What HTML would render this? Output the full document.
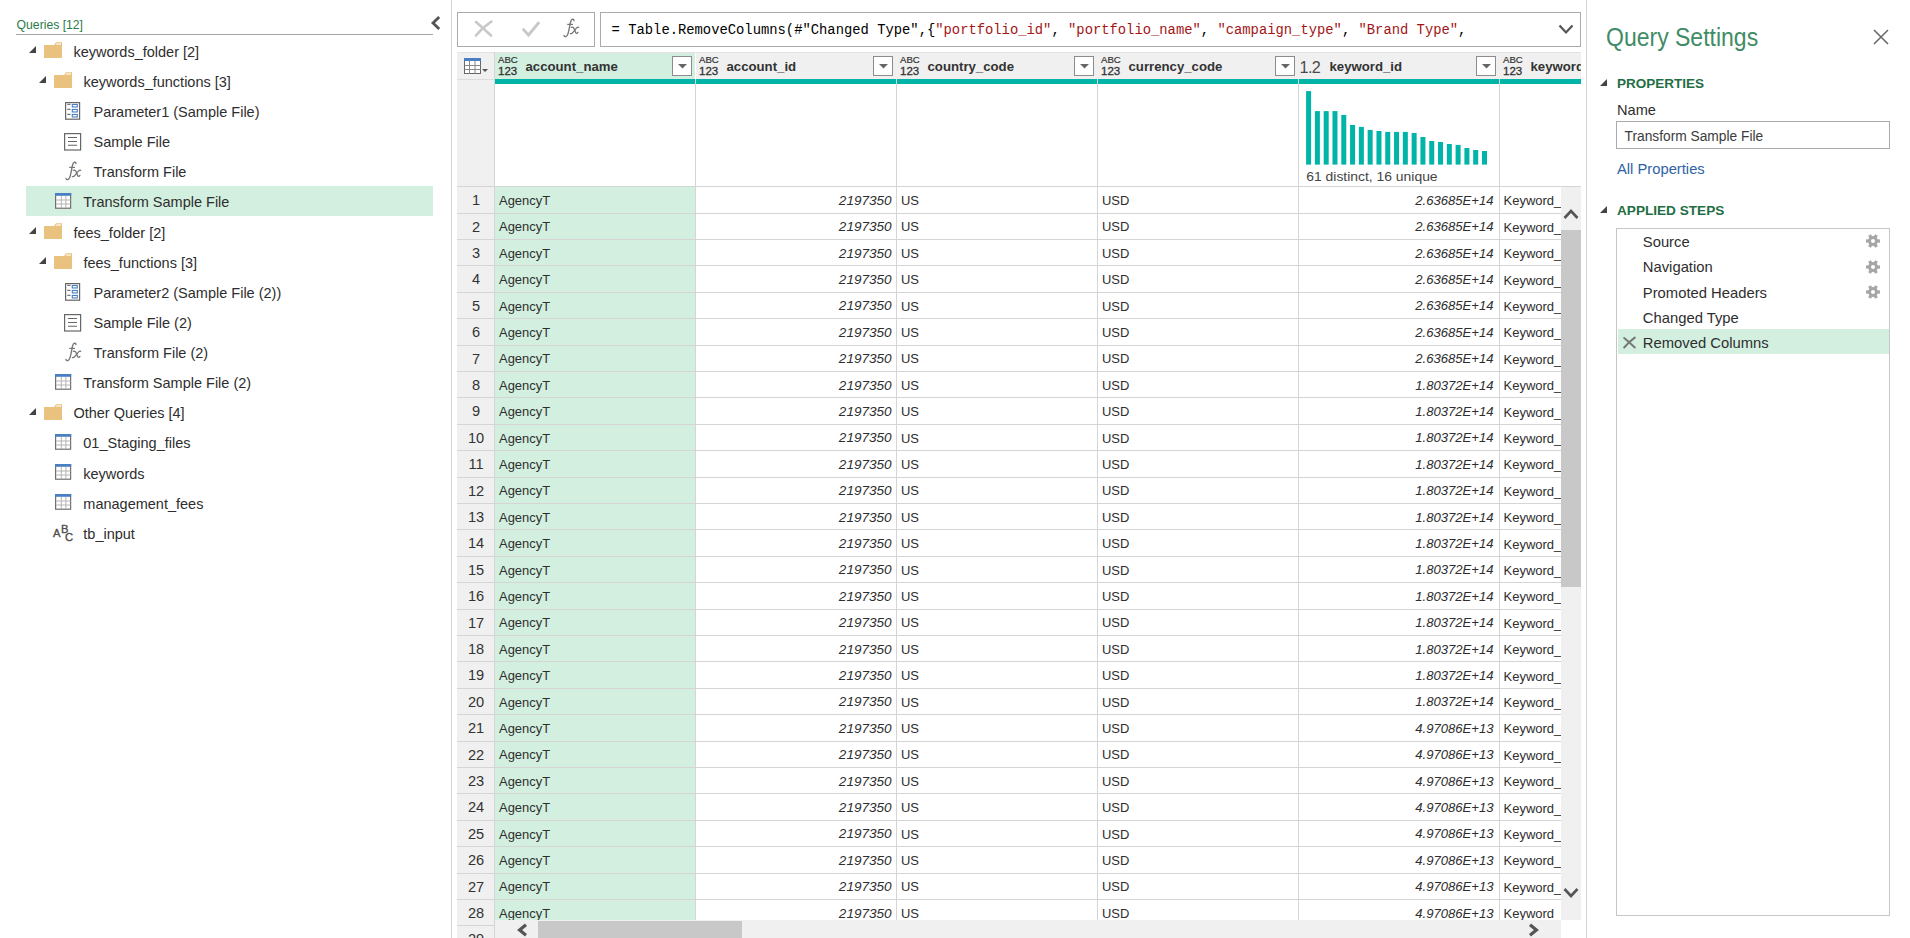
<!DOCTYPE html>
<html><head><meta charset="utf-8"><title>Power Query Editor</title>
<style>
html,body{margin:0;padding:0;background:#fff;}
body{width:1910px;height:938px;position:relative;overflow:hidden;font-family:"Liberation Sans",sans-serif;}
.t{position:absolute;white-space:nowrap;}
.r{position:absolute;}
svg{position:absolute;overflow:visible;}
</style></head><body>

<div class="t" style="left:16.60px;top:18.27px;font-size:12.2px;line-height:15px;color:#2b7a4b;font-weight:normal;font-style:normal;font-family:'Liberation Sans', sans-serif;">Queries [12]</div>
<div class="r" style="left:16px;top:34px;width:417px;height:1px;background:#a6a6a6;"></div>
<svg style="left:430px;top:15px" width="12" height="16" viewBox="0 0 12 16"><path d="M9.2 2 L3 8 L9.2 14" fill="none" stroke="#555" stroke-width="2.8"/></svg>
<div class="r" style="left:451px;top:0px;width:1px;height:938px;background:#d4d4d4;"></div>
<svg style="left:29px;top:46.3px" width="8" height="8" viewBox="0 0 8 8"><path d="M0 7 L7 7 L7 0 Z" fill="#444"/></svg>
<svg style="left:44px;top:42.0px" width="19" height="16" viewBox="0 0 19 16"><path d="M0 3 H10 L12 0.3 H18 V16 H0 Z" fill="#e9c27f"/><path d="M11.2 2.7 L12.6 1.2 H17 V2.7 Z" fill="#fbf0dc"/></svg>
<div class="t" style="left:73.40px;top:43.77px;font-size:14.5px;line-height:17px;color:#2e2e2e;font-weight:normal;font-style:normal;font-family:'Liberation Sans', sans-serif;">keywords_folder [2]</div>
<svg style="left:39px;top:76.425px" width="8" height="8" viewBox="0 0 8 8"><path d="M0 7 L7 7 L7 0 Z" fill="#444"/></svg>
<svg style="left:54px;top:72.125px" width="19" height="16" viewBox="0 0 19 16"><path d="M0 3 H10 L12 0.3 H18 V16 H0 Z" fill="#e9c27f"/><path d="M11.2 2.7 L12.6 1.2 H17 V2.7 Z" fill="#fbf0dc"/></svg>
<div class="t" style="left:83.40px;top:73.90px;font-size:14.5px;line-height:17px;color:#2e2e2e;font-weight:normal;font-style:normal;font-family:'Liberation Sans', sans-serif;">keywords_functions [3]</div>
<svg style="left:65px;top:102.25px" width="16" height="18" viewBox="0 0 16 18"><rect x="0.6" y="0.6" width="14" height="16.6" fill="#fff" stroke="#666" stroke-width="1.2"/><path d="M2.3 2.4 H5.5 M2.3 7.4 H5.5 M2.3 12.4 H5.5" stroke="#777" stroke-width="1.1"/><rect x="7.3" y="2.45" width="5" height="2.5" fill="#fff" stroke="#4a7fc1" stroke-width="1.1"/><rect x="7.3" y="7.45" width="5" height="2.5" fill="#fff" stroke="#4a7fc1" stroke-width="1.1"/><rect x="7.3" y="12.45" width="5" height="2.5" fill="#fff" stroke="#4a7fc1" stroke-width="1.1"/></svg>
<div class="t" style="left:93.50px;top:104.02px;font-size:14.5px;line-height:17px;color:#2e2e2e;font-weight:normal;font-style:normal;font-family:'Liberation Sans', sans-serif;">Parameter1 (Sample File)</div>
<svg style="left:64px;top:132.775px" width="18" height="18" viewBox="0 0 18 18"><rect x="0.6" y="0.6" width="16" height="16.4" fill="#fff" stroke="#666" stroke-width="1.2"/><path d="M4 4.5 H13 M4 8.5 H13 M4 12.3 H13" stroke="#666" stroke-width="1.1"/></svg>
<div class="t" style="left:93.50px;top:134.15px;font-size:14.5px;line-height:17px;color:#2e2e2e;font-weight:normal;font-style:normal;font-family:'Liberation Sans', sans-serif;">Sample File</div>
<svg style="left:60px;top:158.0px" width="24" height="24" viewBox="0 0 24 24"><path d="M6.0 20.4 Q6.3 22.1 8.1 21.5 Q9.9 20.6 10.9 15.2 L12.3 8.0 Q13.2 4.1 14.8 4.2 Q16.2 4.4 15.9 5.6" stroke="#777" stroke-width="1.35" fill="none" stroke-linecap="round"/><path d="M9.2 9.4 H15.0" stroke="#777" stroke-width="1.2" fill="none"/><path d="M13.4 12.4 Q15.1 11.6 16.0 13.6 L17.7 17.6 Q18.6 19.2 19.9 17.4" stroke="#777" stroke-width="1.3" fill="none" stroke-linecap="round"/><path d="M20.7 12.3 Q19.6 11.8 18.4 13.1 L14.9 17.4 Q13.8 18.9 12.4 18.6" stroke="#777" stroke-width="1.3" fill="none" stroke-linecap="round"/></svg>
<div class="t" style="left:93.50px;top:164.27px;font-size:14.5px;line-height:17px;color:#2e2e2e;font-weight:normal;font-style:normal;font-family:'Liberation Sans', sans-serif;">Transform File</div>
<div class="r" style="left:26px;top:186px;width:407px;height:30px;background:#d3efe0;"></div>
<svg style="left:55px;top:192.82500000000002px" width="17" height="16" viewBox="0 0 17 16"><rect x="0.6" y="0.6" width="15" height="14.6" fill="#fff" stroke="#6e6e6e" stroke-width="1.2"/><path d="M6.3 3 V15 M10.9 3 V15 M1 7 H15.6 M1 11 H15.6" stroke="#b4b4b4" stroke-width="1" fill="none"/><rect x="0" y="0" width="16.2" height="2.8" fill="#4a7fc1"/></svg>
<div class="t" style="left:83.30px;top:194.40px;font-size:14.5px;line-height:17px;color:#2e2e2e;font-weight:normal;font-style:normal;font-family:'Liberation Sans', sans-serif;">Transform Sample File</div>
<svg style="left:29px;top:227.05px" width="8" height="8" viewBox="0 0 8 8"><path d="M0 7 L7 7 L7 0 Z" fill="#444"/></svg>
<svg style="left:44px;top:222.75px" width="19" height="16" viewBox="0 0 19 16"><path d="M0 3 H10 L12 0.3 H18 V16 H0 Z" fill="#e9c27f"/><path d="M11.2 2.7 L12.6 1.2 H17 V2.7 Z" fill="#fbf0dc"/></svg>
<div class="t" style="left:73.40px;top:224.52px;font-size:14.5px;line-height:17px;color:#2e2e2e;font-weight:normal;font-style:normal;font-family:'Liberation Sans', sans-serif;">fees_folder [2]</div>
<svg style="left:39px;top:257.175px" width="8" height="8" viewBox="0 0 8 8"><path d="M0 7 L7 7 L7 0 Z" fill="#444"/></svg>
<svg style="left:54px;top:252.875px" width="19" height="16" viewBox="0 0 19 16"><path d="M0 3 H10 L12 0.3 H18 V16 H0 Z" fill="#e9c27f"/><path d="M11.2 2.7 L12.6 1.2 H17 V2.7 Z" fill="#fbf0dc"/></svg>
<div class="t" style="left:83.40px;top:254.65px;font-size:14.5px;line-height:17px;color:#2e2e2e;font-weight:normal;font-style:normal;font-family:'Liberation Sans', sans-serif;">fees_functions [3]</div>
<svg style="left:65px;top:283.0px" width="16" height="18" viewBox="0 0 16 18"><rect x="0.6" y="0.6" width="14" height="16.6" fill="#fff" stroke="#666" stroke-width="1.2"/><path d="M2.3 2.4 H5.5 M2.3 7.4 H5.5 M2.3 12.4 H5.5" stroke="#777" stroke-width="1.1"/><rect x="7.3" y="2.45" width="5" height="2.5" fill="#fff" stroke="#4a7fc1" stroke-width="1.1"/><rect x="7.3" y="7.45" width="5" height="2.5" fill="#fff" stroke="#4a7fc1" stroke-width="1.1"/><rect x="7.3" y="12.45" width="5" height="2.5" fill="#fff" stroke="#4a7fc1" stroke-width="1.1"/></svg>
<div class="t" style="left:93.50px;top:284.77px;font-size:14.5px;line-height:17px;color:#2e2e2e;font-weight:normal;font-style:normal;font-family:'Liberation Sans', sans-serif;">Parameter2 (Sample File (2))</div>
<svg style="left:64px;top:313.52500000000003px" width="18" height="18" viewBox="0 0 18 18"><rect x="0.6" y="0.6" width="16" height="16.4" fill="#fff" stroke="#666" stroke-width="1.2"/><path d="M4 4.5 H13 M4 8.5 H13 M4 12.3 H13" stroke="#666" stroke-width="1.1"/></svg>
<div class="t" style="left:93.50px;top:314.90px;font-size:14.5px;line-height:17px;color:#2e2e2e;font-weight:normal;font-style:normal;font-family:'Liberation Sans', sans-serif;">Sample File (2)</div>
<svg style="left:60px;top:338.75px" width="24" height="24" viewBox="0 0 24 24"><path d="M6.0 20.4 Q6.3 22.1 8.1 21.5 Q9.9 20.6 10.9 15.2 L12.3 8.0 Q13.2 4.1 14.8 4.2 Q16.2 4.4 15.9 5.6" stroke="#777" stroke-width="1.35" fill="none" stroke-linecap="round"/><path d="M9.2 9.4 H15.0" stroke="#777" stroke-width="1.2" fill="none"/><path d="M13.4 12.4 Q15.1 11.6 16.0 13.6 L17.7 17.6 Q18.6 19.2 19.9 17.4" stroke="#777" stroke-width="1.3" fill="none" stroke-linecap="round"/><path d="M20.7 12.3 Q19.6 11.8 18.4 13.1 L14.9 17.4 Q13.8 18.9 12.4 18.6" stroke="#777" stroke-width="1.3" fill="none" stroke-linecap="round"/></svg>
<div class="t" style="left:93.50px;top:345.02px;font-size:14.5px;line-height:17px;color:#2e2e2e;font-weight:normal;font-style:normal;font-family:'Liberation Sans', sans-serif;">Transform File (2)</div>
<svg style="left:55px;top:373.575px" width="17" height="16" viewBox="0 0 17 16"><rect x="0.6" y="0.6" width="15" height="14.6" fill="#fff" stroke="#6e6e6e" stroke-width="1.2"/><path d="M6.3 3 V15 M10.9 3 V15 M1 7 H15.6 M1 11 H15.6" stroke="#b4b4b4" stroke-width="1" fill="none"/><rect x="0" y="0" width="16.2" height="2.8" fill="#4a7fc1"/></svg>
<div class="t" style="left:83.30px;top:375.15px;font-size:14.5px;line-height:17px;color:#2e2e2e;font-weight:normal;font-style:normal;font-family:'Liberation Sans', sans-serif;">Transform Sample File (2)</div>
<svg style="left:29px;top:407.8px" width="8" height="8" viewBox="0 0 8 8"><path d="M0 7 L7 7 L7 0 Z" fill="#444"/></svg>
<svg style="left:44px;top:403.5px" width="19" height="16" viewBox="0 0 19 16"><path d="M0 3 H10 L12 0.3 H18 V16 H0 Z" fill="#e9c27f"/><path d="M11.2 2.7 L12.6 1.2 H17 V2.7 Z" fill="#fbf0dc"/></svg>
<div class="t" style="left:73.40px;top:405.27px;font-size:14.5px;line-height:17px;color:#2e2e2e;font-weight:normal;font-style:normal;font-family:'Liberation Sans', sans-serif;">Other Queries [4]</div>
<svg style="left:55px;top:433.825px" width="17" height="16" viewBox="0 0 17 16"><rect x="0.6" y="0.6" width="15" height="14.6" fill="#fff" stroke="#6e6e6e" stroke-width="1.2"/><path d="M6.3 3 V15 M10.9 3 V15 M1 7 H15.6 M1 11 H15.6" stroke="#b4b4b4" stroke-width="1" fill="none"/><rect x="0" y="0" width="16.2" height="2.8" fill="#4a7fc1"/></svg>
<div class="t" style="left:83.30px;top:435.40px;font-size:14.5px;line-height:17px;color:#2e2e2e;font-weight:normal;font-style:normal;font-family:'Liberation Sans', sans-serif;">01_Staging_files</div>
<svg style="left:55px;top:463.95px" width="17" height="16" viewBox="0 0 17 16"><rect x="0.6" y="0.6" width="15" height="14.6" fill="#fff" stroke="#6e6e6e" stroke-width="1.2"/><path d="M6.3 3 V15 M10.9 3 V15 M1 7 H15.6 M1 11 H15.6" stroke="#b4b4b4" stroke-width="1" fill="none"/><rect x="0" y="0" width="16.2" height="2.8" fill="#4a7fc1"/></svg>
<div class="t" style="left:83.30px;top:465.52px;font-size:14.5px;line-height:17px;color:#2e2e2e;font-weight:normal;font-style:normal;font-family:'Liberation Sans', sans-serif;">keywords</div>
<svg style="left:55px;top:494.075px" width="17" height="16" viewBox="0 0 17 16"><rect x="0.6" y="0.6" width="15" height="14.6" fill="#fff" stroke="#6e6e6e" stroke-width="1.2"/><path d="M6.3 3 V15 M10.9 3 V15 M1 7 H15.6 M1 11 H15.6" stroke="#b4b4b4" stroke-width="1" fill="none"/><rect x="0" y="0" width="16.2" height="2.8" fill="#4a7fc1"/></svg>
<div class="t" style="left:83.30px;top:495.65px;font-size:14.5px;line-height:17px;color:#2e2e2e;font-weight:normal;font-style:normal;font-family:'Liberation Sans', sans-serif;">management_fees</div>
<svg style="left:0px;top:0px" width="1" height="1"><g style="font-family:'Liberation Sans', sans-serif;font-size:11.2px" fill="#4d4d4d" stroke="#4d4d4d" stroke-width="0.35"><text x="53.0" y="536.9">A</text><text x="61.0" y="532.9">B</text><text x="65.1" y="541.0">C</text></g></svg>
<div class="t" style="left:83.30px;top:525.77px;font-size:14.5px;line-height:17px;color:#2e2e2e;font-weight:normal;font-style:normal;font-family:'Liberation Sans', sans-serif;">tb_input</div>
<div class="r" style="left:457px;top:12px;width:138px;height:35px;background:#fff;box-sizing:border-box;border:1px solid #ababab"></div>
<svg style="left:474px;top:20px" width="20" height="17" viewBox="0 0 20 17"><path d="M2 2 Q9 8 17 15.5 M17.5 1.5 Q9 7 2 15.5" stroke="#c8c8c8" stroke-width="2.6" fill="none" stroke-linecap="round"/></svg>
<svg style="left:522px;top:21px" width="18" height="16" viewBox="0 0 18 16"><path d="M1.5 8.5 L6.5 14 L16.5 2" stroke="#c8c8c8" stroke-width="2.8" fill="none" stroke-linecap="round"/></svg>
<svg style="left:558px;top:15px" width="24" height="24" viewBox="0 0 24 24"><path d="M6.0 20.4 Q6.3 22.1 8.1 21.5 Q9.9 20.6 10.9 15.2 L12.3 8.0 Q13.2 4.1 14.8 4.2 Q16.2 4.4 15.9 5.6" stroke="#777" stroke-width="1.35" fill="none" stroke-linecap="round"/><path d="M9.2 9.4 H15.0" stroke="#777" stroke-width="1.2" fill="none"/><path d="M13.4 12.4 Q15.1 11.6 16.0 13.6 L17.7 17.6 Q18.6 19.2 19.9 17.4" stroke="#777" stroke-width="1.3" fill="none" stroke-linecap="round"/><path d="M20.7 12.3 Q19.6 11.8 18.4 13.1 L14.9 17.4 Q13.8 18.9 12.4 18.6" stroke="#777" stroke-width="1.3" fill="none" stroke-linecap="round"/></svg>
<div class="r" style="left:600px;top:12px;width:981px;height:35px;background:#fff;box-sizing:border-box;border:1px solid #ababab"></div>
<div class="t" style="left:611.60px;top:22.12px;font-size:13.83px;line-height:17px;color:#000;font-weight:normal;font-style:normal;font-family:'Liberation Mono', monospace;">= Table.RemoveColumns(#"Changed Type",{<span style="color:#a31515">"portfolio_id"</span>, <span style="color:#a31515">"portfolio_name"</span>, <span style="color:#a31515">"campaign_type"</span>, <span style="color:#a31515">"Brand Type"</span>,</div>
<svg style="left:1558px;top:24px" width="16" height="11" viewBox="0 0 16 11"><path d="M1.5 1.5 L8 8.5 L14.5 1.5" stroke="#555" stroke-width="2.2" fill="none"/></svg>
<div class="r" style="left:457px;top:52px;width:38px;height:27px;background:#f0f0f0;"></div>
<div class="r" style="left:495px;top:52px;width:200px;height:27px;background:#d3efe0;"></div>
<div class="r" style="left:696px;top:52px;width:885px;height:27px;background:#f0f0f0;"></div>
<div class="r" style="left:457px;top:52px;width:1124px;height:1px;background:#e3e3e3;"></div>
<div class="r" style="left:457px;top:79px;width:38px;height:859px;background:#f0f0f0;"></div>
<div class="r" style="left:457px;top:79px;width:38px;height:1px;background:#dcdcdc;"></div>
<div class="r" style="left:495px;top:186px;width:200px;height:734px;background:#d3efe0;"></div>
<div class="r" style="left:495px;top:79px;width:1086px;height:5px;background:#00b4a8;"></div>
<div class="r" style="left:695px;top:79px;width:1px;height:5px;background:#e8f6f4;"></div>
<div class="r" style="left:896px;top:79px;width:1px;height:5px;background:#e8f6f4;"></div>
<div class="r" style="left:1097px;top:79px;width:1px;height:5px;background:#e8f6f4;"></div>
<div class="r" style="left:1298px;top:79px;width:1px;height:5px;background:#e8f6f4;"></div>
<div class="r" style="left:1499px;top:79px;width:1px;height:5px;background:#e8f6f4;"></div>
<div class="r" style="left:494px;top:52px;width:1px;height:886px;background:#d5d5d5;"></div>
<div class="r" style="left:695px;top:79px;width:1px;height:841px;background:#d5d5d5;"></div>
<div class="r" style="left:896px;top:79px;width:1px;height:841px;background:#d5d5d5;"></div>
<div class="r" style="left:1097px;top:79px;width:1px;height:841px;background:#d5d5d5;"></div>
<div class="r" style="left:1298px;top:79px;width:1px;height:841px;background:#d5d5d5;"></div>
<div class="r" style="left:1499px;top:79px;width:1px;height:841px;background:#d5d5d5;"></div>
<div class="r" style="left:457px;top:186.2px;width:1124px;height:1px;background:#d5d5d5;"></div>
<div class="r" style="left:457px;top:212.6px;width:1124px;height:1px;background:#d5d5d5;"></div>
<div class="r" style="left:457px;top:239.0px;width:1124px;height:1px;background:#d5d5d5;"></div>
<div class="r" style="left:457px;top:265.4px;width:1124px;height:1px;background:#d5d5d5;"></div>
<div class="r" style="left:457px;top:291.8px;width:1124px;height:1px;background:#d5d5d5;"></div>
<div class="r" style="left:457px;top:318.2px;width:1124px;height:1px;background:#d5d5d5;"></div>
<div class="r" style="left:457px;top:344.6px;width:1124px;height:1px;background:#d5d5d5;"></div>
<div class="r" style="left:457px;top:371.0px;width:1124px;height:1px;background:#d5d5d5;"></div>
<div class="r" style="left:457px;top:397.4px;width:1124px;height:1px;background:#d5d5d5;"></div>
<div class="r" style="left:457px;top:423.8px;width:1124px;height:1px;background:#d5d5d5;"></div>
<div class="r" style="left:457px;top:450.2px;width:1124px;height:1px;background:#d5d5d5;"></div>
<div class="r" style="left:457px;top:476.6px;width:1124px;height:1px;background:#d5d5d5;"></div>
<div class="r" style="left:457px;top:503.0px;width:1124px;height:1px;background:#d5d5d5;"></div>
<div class="r" style="left:457px;top:529.4px;width:1124px;height:1px;background:#d5d5d5;"></div>
<div class="r" style="left:457px;top:555.8px;width:1124px;height:1px;background:#d5d5d5;"></div>
<div class="r" style="left:457px;top:582.2px;width:1124px;height:1px;background:#d5d5d5;"></div>
<div class="r" style="left:457px;top:608.6px;width:1124px;height:1px;background:#d5d5d5;"></div>
<div class="r" style="left:457px;top:635.0px;width:1124px;height:1px;background:#d5d5d5;"></div>
<div class="r" style="left:457px;top:661.4px;width:1124px;height:1px;background:#d5d5d5;"></div>
<div class="r" style="left:457px;top:687.8px;width:1124px;height:1px;background:#d5d5d5;"></div>
<div class="r" style="left:457px;top:714.2px;width:1124px;height:1px;background:#d5d5d5;"></div>
<div class="r" style="left:457px;top:740.6px;width:1124px;height:1px;background:#d5d5d5;"></div>
<div class="r" style="left:457px;top:767.0px;width:1124px;height:1px;background:#d5d5d5;"></div>
<div class="r" style="left:457px;top:793.4px;width:1124px;height:1px;background:#d5d5d5;"></div>
<div class="r" style="left:457px;top:819.8px;width:1124px;height:1px;background:#d5d5d5;"></div>
<div class="r" style="left:457px;top:846.2px;width:1124px;height:1px;background:#d5d5d5;"></div>
<div class="r" style="left:457px;top:872.6px;width:1124px;height:1px;background:#d5d5d5;"></div>
<div class="r" style="left:457px;top:899.0px;width:1124px;height:1px;background:#d5d5d5;"></div>
<div class="r" style="left:457px;top:925.4px;width:1124px;height:1px;background:#d5d5d5;"></div>
<svg style="left:464px;top:58px" width="26" height="17" viewBox="0 0 26 17"><rect x="0.5" y="0.5" width="16" height="15" fill="#fff" stroke="#666"/><rect x="0" y="0" width="17" height="3" fill="#4a7fc1"/><path d="M0.5 7.5 H16.5 M0.5 11.5 H16.5 M5.5 3 V15.5 M11 3 V15.5" stroke="#888" fill="none"/><path d="M18 11 H24 L21 14 Z" fill="#555"/></svg>
<div class="t" style="left:498.0px;top:55px;font-size:9.6px;line-height:10px;color:#333;-webkit-text-stroke:0.2px #333">ABC</div>
<div class="t" style="left:498.0px;top:64.5px;font-size:11.5px;line-height:12px;color:#333;-webkit-text-stroke:0.3px #333">123</div>
<div class="t" style="left:525.50px;top:59.02px;font-size:13.2px;line-height:16px;color:#333;font-weight:bold;font-style:normal;font-family:'Liberation Sans', sans-serif;">account_name</div>
<div class="r" style="left:672.0px;top:56px;width:20px;height:20px;box-sizing:border-box;background:#fff;border:1px solid #8c8c8c"></div>
<svg style="left:677.5px;top:64px" width="9" height="5" viewBox="0 0 9 5"><path d="M0 0 H9 L4.5 4.5 Z" fill="#666"/></svg>
<div class="t" style="left:699.0px;top:55px;font-size:9.6px;line-height:10px;color:#333;-webkit-text-stroke:0.2px #333">ABC</div>
<div class="t" style="left:699.0px;top:64.5px;font-size:11.5px;line-height:12px;color:#333;-webkit-text-stroke:0.3px #333">123</div>
<div class="t" style="left:726.50px;top:59.02px;font-size:13.2px;line-height:16px;color:#333;font-weight:bold;font-style:normal;font-family:'Liberation Sans', sans-serif;">account_id</div>
<div class="r" style="left:873.0px;top:56px;width:20px;height:20px;box-sizing:border-box;background:#fff;border:1px solid #8c8c8c"></div>
<svg style="left:878.5px;top:64px" width="9" height="5" viewBox="0 0 9 5"><path d="M0 0 H9 L4.5 4.5 Z" fill="#666"/></svg>
<div class="t" style="left:900.0px;top:55px;font-size:9.6px;line-height:10px;color:#333;-webkit-text-stroke:0.2px #333">ABC</div>
<div class="t" style="left:900.0px;top:64.5px;font-size:11.5px;line-height:12px;color:#333;-webkit-text-stroke:0.3px #333">123</div>
<div class="t" style="left:927.50px;top:59.02px;font-size:13.2px;line-height:16px;color:#333;font-weight:bold;font-style:normal;font-family:'Liberation Sans', sans-serif;">country_code</div>
<div class="r" style="left:1074.0px;top:56px;width:20px;height:20px;box-sizing:border-box;background:#fff;border:1px solid #8c8c8c"></div>
<svg style="left:1079.5px;top:64px" width="9" height="5" viewBox="0 0 9 5"><path d="M0 0 H9 L4.5 4.5 Z" fill="#666"/></svg>
<div class="t" style="left:1101.0px;top:55px;font-size:9.6px;line-height:10px;color:#333;-webkit-text-stroke:0.2px #333">ABC</div>
<div class="t" style="left:1101.0px;top:64.5px;font-size:11.5px;line-height:12px;color:#333;-webkit-text-stroke:0.3px #333">123</div>
<div class="t" style="left:1128.50px;top:59.02px;font-size:13.2px;line-height:16px;color:#333;font-weight:bold;font-style:normal;font-family:'Liberation Sans', sans-serif;">currency_code</div>
<div class="r" style="left:1275.0px;top:56px;width:20px;height:20px;box-sizing:border-box;background:#fff;border:1px solid #8c8c8c"></div>
<svg style="left:1280.5px;top:64px" width="9" height="5" viewBox="0 0 9 5"><path d="M0 0 H9 L4.5 4.5 Z" fill="#666"/></svg>
<div class="t" style="left:1299.5px;top:57.6px;font-size:16.2px;line-height:19px;color:#4a4a4a;letter-spacing:-0.6px">1.2</div>
<div class="t" style="left:1329.50px;top:59.02px;font-size:13.2px;line-height:16px;color:#333;font-weight:bold;font-style:normal;font-family:'Liberation Sans', sans-serif;">keyword_id</div>
<div class="r" style="left:1476.0px;top:56px;width:20px;height:20px;box-sizing:border-box;background:#fff;border:1px solid #8c8c8c"></div>
<svg style="left:1481.5px;top:64px" width="9" height="5" viewBox="0 0 9 5"><path d="M0 0 H9 L4.5 4.5 Z" fill="#666"/></svg>
<div class="t" style="left:1503.0px;top:55px;font-size:9.6px;line-height:10px;color:#333;-webkit-text-stroke:0.2px #333">ABC</div>
<div class="t" style="left:1503.0px;top:64.5px;font-size:11.5px;line-height:12px;color:#333;-webkit-text-stroke:0.3px #333">123</div>
<div class="t" style="left:1530.50px;top:59.02px;font-size:13.2px;line-height:16px;color:#333;font-weight:bold;font-style:normal;font-family:'Liberation Sans', sans-serif;width:50.5px;overflow:hidden;">keyword_name</div>
<div class="r" style="left:1581px;top:48px;width:5px;height:890px;background:#fff;"></div>
<svg style="left:1306px;top:91px" width="190" height="74" viewBox="0 0 190 74"><rect x="0.10" y="0.1" width="5" height="73.5" fill="#00b4a8"/><rect x="8.89" y="20.1" width="5" height="53.5" fill="#00b4a8"/><rect x="17.69" y="20.1" width="5" height="53.5" fill="#00b4a8"/><rect x="26.48" y="20.1" width="5" height="53.5" fill="#00b4a8"/><rect x="35.28" y="23.9" width="5" height="49.7" fill="#00b4a8"/><rect x="44.07" y="33.9" width="5" height="39.7" fill="#00b4a8"/><rect x="52.87" y="35.9" width="5" height="37.7" fill="#00b4a8"/><rect x="61.66" y="38.9" width="5" height="34.7" fill="#00b4a8"/><rect x="70.46" y="40.0" width="5" height="33.6" fill="#00b4a8"/><rect x="79.25" y="40.9" width="5" height="32.7" fill="#00b4a8"/><rect x="88.05" y="40.9" width="5" height="32.7" fill="#00b4a8"/><rect x="96.84" y="40.9" width="5" height="32.7" fill="#00b4a8"/><rect x="105.64" y="42.0" width="5" height="31.6" fill="#00b4a8"/><rect x="114.43" y="46.0" width="5" height="27.6" fill="#00b4a8"/><rect x="123.23" y="50.0" width="5" height="23.6" fill="#00b4a8"/><rect x="132.02" y="51.0" width="5" height="22.6" fill="#00b4a8"/><rect x="140.82" y="53.0" width="5" height="20.6" fill="#00b4a8"/><rect x="149.61" y="53.9" width="5" height="19.7" fill="#00b4a8"/><rect x="158.41" y="57.0" width="5" height="16.6" fill="#00b4a8"/><rect x="167.20" y="59.0" width="5" height="14.6" fill="#00b4a8"/><rect x="176.00" y="60.0" width="5" height="13.6" fill="#00b4a8"/></svg>
<div class="t" style="left:1306.30px;top:167.98px;font-size:13.9px;line-height:17px;color:#444;font-weight:normal;font-style:normal;font-family:'Liberation Sans', sans-serif;transform:scaleY(0.92);transform-origin:0 80%;">61 distinct, 16 unique</div>
<div class="t" style="left:457px;width:38px;text-align:center;top:192.1px;font-size:14.6px;line-height:17px;color:#333">1</div>
<div class="t" style="left:499.00px;top:192.91px;font-size:12.96px;line-height:16px;color:#2e2e2e;font-weight:normal;font-style:normal;font-family:'Liberation Sans', sans-serif;">AgencyT</div>
<div class="t" style="right:1018.40px;top:192.70px;font-size:13.56px;line-height:16px;color:#2e2e2e;font-weight:normal;font-style:italic;font-family:'Liberation Sans', sans-serif;text-align:right">2197350</div>
<div class="t" style="left:901.00px;top:192.91px;font-size:12.96px;line-height:16px;color:#2e2e2e;font-weight:normal;font-style:normal;font-family:'Liberation Sans', sans-serif;">US</div>
<div class="t" style="left:1102.00px;top:192.91px;font-size:12.96px;line-height:16px;color:#2e2e2e;font-weight:normal;font-style:normal;font-family:'Liberation Sans', sans-serif;">USD</div>
<div class="t" style="right:416.40px;top:192.85px;font-size:13.12px;line-height:16px;color:#2e2e2e;font-weight:normal;font-style:italic;font-family:'Liberation Sans', sans-serif;text-align:right">2.63685E+14</div>
<div class="t" style="left:1503.5px;width:57px;overflow:hidden;top:193.3px;font-size:13px;line-height:16px;color:#2e2e2e">Keyword_name</div>
<div class="t" style="left:457px;width:38px;text-align:center;top:218.5px;font-size:14.6px;line-height:17px;color:#333">2</div>
<div class="t" style="left:499.00px;top:219.31px;font-size:12.96px;line-height:16px;color:#2e2e2e;font-weight:normal;font-style:normal;font-family:'Liberation Sans', sans-serif;">AgencyT</div>
<div class="t" style="right:1018.40px;top:219.10px;font-size:13.56px;line-height:16px;color:#2e2e2e;font-weight:normal;font-style:italic;font-family:'Liberation Sans', sans-serif;text-align:right">2197350</div>
<div class="t" style="left:901.00px;top:219.31px;font-size:12.96px;line-height:16px;color:#2e2e2e;font-weight:normal;font-style:normal;font-family:'Liberation Sans', sans-serif;">US</div>
<div class="t" style="left:1102.00px;top:219.31px;font-size:12.96px;line-height:16px;color:#2e2e2e;font-weight:normal;font-style:normal;font-family:'Liberation Sans', sans-serif;">USD</div>
<div class="t" style="right:416.40px;top:219.25px;font-size:13.12px;line-height:16px;color:#2e2e2e;font-weight:normal;font-style:italic;font-family:'Liberation Sans', sans-serif;text-align:right">2.63685E+14</div>
<div class="t" style="left:1503.5px;width:57px;overflow:hidden;top:219.7px;font-size:13px;line-height:16px;color:#2e2e2e">Keyword_name</div>
<div class="t" style="left:457px;width:38px;text-align:center;top:244.9px;font-size:14.6px;line-height:17px;color:#333">3</div>
<div class="t" style="left:499.00px;top:245.71px;font-size:12.96px;line-height:16px;color:#2e2e2e;font-weight:normal;font-style:normal;font-family:'Liberation Sans', sans-serif;">AgencyT</div>
<div class="t" style="right:1018.40px;top:245.50px;font-size:13.56px;line-height:16px;color:#2e2e2e;font-weight:normal;font-style:italic;font-family:'Liberation Sans', sans-serif;text-align:right">2197350</div>
<div class="t" style="left:901.00px;top:245.71px;font-size:12.96px;line-height:16px;color:#2e2e2e;font-weight:normal;font-style:normal;font-family:'Liberation Sans', sans-serif;">US</div>
<div class="t" style="left:1102.00px;top:245.71px;font-size:12.96px;line-height:16px;color:#2e2e2e;font-weight:normal;font-style:normal;font-family:'Liberation Sans', sans-serif;">USD</div>
<div class="t" style="right:416.40px;top:245.65px;font-size:13.12px;line-height:16px;color:#2e2e2e;font-weight:normal;font-style:italic;font-family:'Liberation Sans', sans-serif;text-align:right">2.63685E+14</div>
<div class="t" style="left:1503.5px;width:57px;overflow:hidden;top:246.1px;font-size:13px;line-height:16px;color:#2e2e2e">Keyword_name</div>
<div class="t" style="left:457px;width:38px;text-align:center;top:271.3px;font-size:14.6px;line-height:17px;color:#333">4</div>
<div class="t" style="left:499.00px;top:272.11px;font-size:12.96px;line-height:16px;color:#2e2e2e;font-weight:normal;font-style:normal;font-family:'Liberation Sans', sans-serif;">AgencyT</div>
<div class="t" style="right:1018.40px;top:271.90px;font-size:13.56px;line-height:16px;color:#2e2e2e;font-weight:normal;font-style:italic;font-family:'Liberation Sans', sans-serif;text-align:right">2197350</div>
<div class="t" style="left:901.00px;top:272.11px;font-size:12.96px;line-height:16px;color:#2e2e2e;font-weight:normal;font-style:normal;font-family:'Liberation Sans', sans-serif;">US</div>
<div class="t" style="left:1102.00px;top:272.11px;font-size:12.96px;line-height:16px;color:#2e2e2e;font-weight:normal;font-style:normal;font-family:'Liberation Sans', sans-serif;">USD</div>
<div class="t" style="right:416.40px;top:272.05px;font-size:13.12px;line-height:16px;color:#2e2e2e;font-weight:normal;font-style:italic;font-family:'Liberation Sans', sans-serif;text-align:right">2.63685E+14</div>
<div class="t" style="left:1503.5px;width:57px;overflow:hidden;top:272.5px;font-size:13px;line-height:16px;color:#2e2e2e">Keyword_name</div>
<div class="t" style="left:457px;width:38px;text-align:center;top:297.7px;font-size:14.6px;line-height:17px;color:#333">5</div>
<div class="t" style="left:499.00px;top:298.51px;font-size:12.96px;line-height:16px;color:#2e2e2e;font-weight:normal;font-style:normal;font-family:'Liberation Sans', sans-serif;">AgencyT</div>
<div class="t" style="right:1018.40px;top:298.30px;font-size:13.56px;line-height:16px;color:#2e2e2e;font-weight:normal;font-style:italic;font-family:'Liberation Sans', sans-serif;text-align:right">2197350</div>
<div class="t" style="left:901.00px;top:298.51px;font-size:12.96px;line-height:16px;color:#2e2e2e;font-weight:normal;font-style:normal;font-family:'Liberation Sans', sans-serif;">US</div>
<div class="t" style="left:1102.00px;top:298.51px;font-size:12.96px;line-height:16px;color:#2e2e2e;font-weight:normal;font-style:normal;font-family:'Liberation Sans', sans-serif;">USD</div>
<div class="t" style="right:416.40px;top:298.45px;font-size:13.12px;line-height:16px;color:#2e2e2e;font-weight:normal;font-style:italic;font-family:'Liberation Sans', sans-serif;text-align:right">2.63685E+14</div>
<div class="t" style="left:1503.5px;width:57px;overflow:hidden;top:298.9px;font-size:13px;line-height:16px;color:#2e2e2e">Keyword_name</div>
<div class="t" style="left:457px;width:38px;text-align:center;top:324.1px;font-size:14.6px;line-height:17px;color:#333">6</div>
<div class="t" style="left:499.00px;top:324.91px;font-size:12.96px;line-height:16px;color:#2e2e2e;font-weight:normal;font-style:normal;font-family:'Liberation Sans', sans-serif;">AgencyT</div>
<div class="t" style="right:1018.40px;top:324.70px;font-size:13.56px;line-height:16px;color:#2e2e2e;font-weight:normal;font-style:italic;font-family:'Liberation Sans', sans-serif;text-align:right">2197350</div>
<div class="t" style="left:901.00px;top:324.91px;font-size:12.96px;line-height:16px;color:#2e2e2e;font-weight:normal;font-style:normal;font-family:'Liberation Sans', sans-serif;">US</div>
<div class="t" style="left:1102.00px;top:324.91px;font-size:12.96px;line-height:16px;color:#2e2e2e;font-weight:normal;font-style:normal;font-family:'Liberation Sans', sans-serif;">USD</div>
<div class="t" style="right:416.40px;top:324.85px;font-size:13.12px;line-height:16px;color:#2e2e2e;font-weight:normal;font-style:italic;font-family:'Liberation Sans', sans-serif;text-align:right">2.63685E+14</div>
<div class="t" style="left:1503.5px;width:57px;overflow:hidden;top:325.3px;font-size:13px;line-height:16px;color:#2e2e2e">Keyword_name</div>
<div class="t" style="left:457px;width:38px;text-align:center;top:350.5px;font-size:14.6px;line-height:17px;color:#333">7</div>
<div class="t" style="left:499.00px;top:351.31px;font-size:12.96px;line-height:16px;color:#2e2e2e;font-weight:normal;font-style:normal;font-family:'Liberation Sans', sans-serif;">AgencyT</div>
<div class="t" style="right:1018.40px;top:351.10px;font-size:13.56px;line-height:16px;color:#2e2e2e;font-weight:normal;font-style:italic;font-family:'Liberation Sans', sans-serif;text-align:right">2197350</div>
<div class="t" style="left:901.00px;top:351.31px;font-size:12.96px;line-height:16px;color:#2e2e2e;font-weight:normal;font-style:normal;font-family:'Liberation Sans', sans-serif;">US</div>
<div class="t" style="left:1102.00px;top:351.31px;font-size:12.96px;line-height:16px;color:#2e2e2e;font-weight:normal;font-style:normal;font-family:'Liberation Sans', sans-serif;">USD</div>
<div class="t" style="right:416.40px;top:351.25px;font-size:13.12px;line-height:16px;color:#2e2e2e;font-weight:normal;font-style:italic;font-family:'Liberation Sans', sans-serif;text-align:right">2.63685E+14</div>
<div class="t" style="left:1503.5px;width:57px;overflow:hidden;top:351.7px;font-size:13px;line-height:16px;color:#2e2e2e">Keyword_name</div>
<div class="t" style="left:457px;width:38px;text-align:center;top:376.9px;font-size:14.6px;line-height:17px;color:#333">8</div>
<div class="t" style="left:499.00px;top:377.71px;font-size:12.96px;line-height:16px;color:#2e2e2e;font-weight:normal;font-style:normal;font-family:'Liberation Sans', sans-serif;">AgencyT</div>
<div class="t" style="right:1018.40px;top:377.50px;font-size:13.56px;line-height:16px;color:#2e2e2e;font-weight:normal;font-style:italic;font-family:'Liberation Sans', sans-serif;text-align:right">2197350</div>
<div class="t" style="left:901.00px;top:377.71px;font-size:12.96px;line-height:16px;color:#2e2e2e;font-weight:normal;font-style:normal;font-family:'Liberation Sans', sans-serif;">US</div>
<div class="t" style="left:1102.00px;top:377.71px;font-size:12.96px;line-height:16px;color:#2e2e2e;font-weight:normal;font-style:normal;font-family:'Liberation Sans', sans-serif;">USD</div>
<div class="t" style="right:416.40px;top:377.65px;font-size:13.12px;line-height:16px;color:#2e2e2e;font-weight:normal;font-style:italic;font-family:'Liberation Sans', sans-serif;text-align:right">1.80372E+14</div>
<div class="t" style="left:1503.5px;width:57px;overflow:hidden;top:378.1px;font-size:13px;line-height:16px;color:#2e2e2e">Keyword_name</div>
<div class="t" style="left:457px;width:38px;text-align:center;top:403.3px;font-size:14.6px;line-height:17px;color:#333">9</div>
<div class="t" style="left:499.00px;top:404.11px;font-size:12.96px;line-height:16px;color:#2e2e2e;font-weight:normal;font-style:normal;font-family:'Liberation Sans', sans-serif;">AgencyT</div>
<div class="t" style="right:1018.40px;top:403.90px;font-size:13.56px;line-height:16px;color:#2e2e2e;font-weight:normal;font-style:italic;font-family:'Liberation Sans', sans-serif;text-align:right">2197350</div>
<div class="t" style="left:901.00px;top:404.11px;font-size:12.96px;line-height:16px;color:#2e2e2e;font-weight:normal;font-style:normal;font-family:'Liberation Sans', sans-serif;">US</div>
<div class="t" style="left:1102.00px;top:404.11px;font-size:12.96px;line-height:16px;color:#2e2e2e;font-weight:normal;font-style:normal;font-family:'Liberation Sans', sans-serif;">USD</div>
<div class="t" style="right:416.40px;top:404.05px;font-size:13.12px;line-height:16px;color:#2e2e2e;font-weight:normal;font-style:italic;font-family:'Liberation Sans', sans-serif;text-align:right">1.80372E+14</div>
<div class="t" style="left:1503.5px;width:57px;overflow:hidden;top:404.5px;font-size:13px;line-height:16px;color:#2e2e2e">Keyword_name</div>
<div class="t" style="left:457px;width:38px;text-align:center;top:429.7px;font-size:14.6px;line-height:17px;color:#333">10</div>
<div class="t" style="left:499.00px;top:430.51px;font-size:12.96px;line-height:16px;color:#2e2e2e;font-weight:normal;font-style:normal;font-family:'Liberation Sans', sans-serif;">AgencyT</div>
<div class="t" style="right:1018.40px;top:430.30px;font-size:13.56px;line-height:16px;color:#2e2e2e;font-weight:normal;font-style:italic;font-family:'Liberation Sans', sans-serif;text-align:right">2197350</div>
<div class="t" style="left:901.00px;top:430.51px;font-size:12.96px;line-height:16px;color:#2e2e2e;font-weight:normal;font-style:normal;font-family:'Liberation Sans', sans-serif;">US</div>
<div class="t" style="left:1102.00px;top:430.51px;font-size:12.96px;line-height:16px;color:#2e2e2e;font-weight:normal;font-style:normal;font-family:'Liberation Sans', sans-serif;">USD</div>
<div class="t" style="right:416.40px;top:430.45px;font-size:13.12px;line-height:16px;color:#2e2e2e;font-weight:normal;font-style:italic;font-family:'Liberation Sans', sans-serif;text-align:right">1.80372E+14</div>
<div class="t" style="left:1503.5px;width:57px;overflow:hidden;top:430.9px;font-size:13px;line-height:16px;color:#2e2e2e">Keyword_name</div>
<div class="t" style="left:457px;width:38px;text-align:center;top:456.1px;font-size:14.6px;line-height:17px;color:#333">11</div>
<div class="t" style="left:499.00px;top:456.91px;font-size:12.96px;line-height:16px;color:#2e2e2e;font-weight:normal;font-style:normal;font-family:'Liberation Sans', sans-serif;">AgencyT</div>
<div class="t" style="right:1018.40px;top:456.70px;font-size:13.56px;line-height:16px;color:#2e2e2e;font-weight:normal;font-style:italic;font-family:'Liberation Sans', sans-serif;text-align:right">2197350</div>
<div class="t" style="left:901.00px;top:456.91px;font-size:12.96px;line-height:16px;color:#2e2e2e;font-weight:normal;font-style:normal;font-family:'Liberation Sans', sans-serif;">US</div>
<div class="t" style="left:1102.00px;top:456.91px;font-size:12.96px;line-height:16px;color:#2e2e2e;font-weight:normal;font-style:normal;font-family:'Liberation Sans', sans-serif;">USD</div>
<div class="t" style="right:416.40px;top:456.85px;font-size:13.12px;line-height:16px;color:#2e2e2e;font-weight:normal;font-style:italic;font-family:'Liberation Sans', sans-serif;text-align:right">1.80372E+14</div>
<div class="t" style="left:1503.5px;width:57px;overflow:hidden;top:457.3px;font-size:13px;line-height:16px;color:#2e2e2e">Keyword_name</div>
<div class="t" style="left:457px;width:38px;text-align:center;top:482.5px;font-size:14.6px;line-height:17px;color:#333">12</div>
<div class="t" style="left:499.00px;top:483.31px;font-size:12.96px;line-height:16px;color:#2e2e2e;font-weight:normal;font-style:normal;font-family:'Liberation Sans', sans-serif;">AgencyT</div>
<div class="t" style="right:1018.40px;top:483.10px;font-size:13.56px;line-height:16px;color:#2e2e2e;font-weight:normal;font-style:italic;font-family:'Liberation Sans', sans-serif;text-align:right">2197350</div>
<div class="t" style="left:901.00px;top:483.31px;font-size:12.96px;line-height:16px;color:#2e2e2e;font-weight:normal;font-style:normal;font-family:'Liberation Sans', sans-serif;">US</div>
<div class="t" style="left:1102.00px;top:483.31px;font-size:12.96px;line-height:16px;color:#2e2e2e;font-weight:normal;font-style:normal;font-family:'Liberation Sans', sans-serif;">USD</div>
<div class="t" style="right:416.40px;top:483.25px;font-size:13.12px;line-height:16px;color:#2e2e2e;font-weight:normal;font-style:italic;font-family:'Liberation Sans', sans-serif;text-align:right">1.80372E+14</div>
<div class="t" style="left:1503.5px;width:57px;overflow:hidden;top:483.7px;font-size:13px;line-height:16px;color:#2e2e2e">Keyword_name</div>
<div class="t" style="left:457px;width:38px;text-align:center;top:508.9px;font-size:14.6px;line-height:17px;color:#333">13</div>
<div class="t" style="left:499.00px;top:509.71px;font-size:12.96px;line-height:16px;color:#2e2e2e;font-weight:normal;font-style:normal;font-family:'Liberation Sans', sans-serif;">AgencyT</div>
<div class="t" style="right:1018.40px;top:509.50px;font-size:13.56px;line-height:16px;color:#2e2e2e;font-weight:normal;font-style:italic;font-family:'Liberation Sans', sans-serif;text-align:right">2197350</div>
<div class="t" style="left:901.00px;top:509.71px;font-size:12.96px;line-height:16px;color:#2e2e2e;font-weight:normal;font-style:normal;font-family:'Liberation Sans', sans-serif;">US</div>
<div class="t" style="left:1102.00px;top:509.71px;font-size:12.96px;line-height:16px;color:#2e2e2e;font-weight:normal;font-style:normal;font-family:'Liberation Sans', sans-serif;">USD</div>
<div class="t" style="right:416.40px;top:509.65px;font-size:13.12px;line-height:16px;color:#2e2e2e;font-weight:normal;font-style:italic;font-family:'Liberation Sans', sans-serif;text-align:right">1.80372E+14</div>
<div class="t" style="left:1503.5px;width:57px;overflow:hidden;top:510.1px;font-size:13px;line-height:16px;color:#2e2e2e">Keyword_name</div>
<div class="t" style="left:457px;width:38px;text-align:center;top:535.3px;font-size:14.6px;line-height:17px;color:#333">14</div>
<div class="t" style="left:499.00px;top:536.11px;font-size:12.96px;line-height:16px;color:#2e2e2e;font-weight:normal;font-style:normal;font-family:'Liberation Sans', sans-serif;">AgencyT</div>
<div class="t" style="right:1018.40px;top:535.90px;font-size:13.56px;line-height:16px;color:#2e2e2e;font-weight:normal;font-style:italic;font-family:'Liberation Sans', sans-serif;text-align:right">2197350</div>
<div class="t" style="left:901.00px;top:536.11px;font-size:12.96px;line-height:16px;color:#2e2e2e;font-weight:normal;font-style:normal;font-family:'Liberation Sans', sans-serif;">US</div>
<div class="t" style="left:1102.00px;top:536.11px;font-size:12.96px;line-height:16px;color:#2e2e2e;font-weight:normal;font-style:normal;font-family:'Liberation Sans', sans-serif;">USD</div>
<div class="t" style="right:416.40px;top:536.05px;font-size:13.12px;line-height:16px;color:#2e2e2e;font-weight:normal;font-style:italic;font-family:'Liberation Sans', sans-serif;text-align:right">1.80372E+14</div>
<div class="t" style="left:1503.5px;width:57px;overflow:hidden;top:536.5px;font-size:13px;line-height:16px;color:#2e2e2e">Keyword_name</div>
<div class="t" style="left:457px;width:38px;text-align:center;top:561.7px;font-size:14.6px;line-height:17px;color:#333">15</div>
<div class="t" style="left:499.00px;top:562.51px;font-size:12.96px;line-height:16px;color:#2e2e2e;font-weight:normal;font-style:normal;font-family:'Liberation Sans', sans-serif;">AgencyT</div>
<div class="t" style="right:1018.40px;top:562.30px;font-size:13.56px;line-height:16px;color:#2e2e2e;font-weight:normal;font-style:italic;font-family:'Liberation Sans', sans-serif;text-align:right">2197350</div>
<div class="t" style="left:901.00px;top:562.51px;font-size:12.96px;line-height:16px;color:#2e2e2e;font-weight:normal;font-style:normal;font-family:'Liberation Sans', sans-serif;">US</div>
<div class="t" style="left:1102.00px;top:562.51px;font-size:12.96px;line-height:16px;color:#2e2e2e;font-weight:normal;font-style:normal;font-family:'Liberation Sans', sans-serif;">USD</div>
<div class="t" style="right:416.40px;top:562.45px;font-size:13.12px;line-height:16px;color:#2e2e2e;font-weight:normal;font-style:italic;font-family:'Liberation Sans', sans-serif;text-align:right">1.80372E+14</div>
<div class="t" style="left:1503.5px;width:57px;overflow:hidden;top:562.9px;font-size:13px;line-height:16px;color:#2e2e2e">Keyword_name</div>
<div class="t" style="left:457px;width:38px;text-align:center;top:588.1px;font-size:14.6px;line-height:17px;color:#333">16</div>
<div class="t" style="left:499.00px;top:588.91px;font-size:12.96px;line-height:16px;color:#2e2e2e;font-weight:normal;font-style:normal;font-family:'Liberation Sans', sans-serif;">AgencyT</div>
<div class="t" style="right:1018.40px;top:588.70px;font-size:13.56px;line-height:16px;color:#2e2e2e;font-weight:normal;font-style:italic;font-family:'Liberation Sans', sans-serif;text-align:right">2197350</div>
<div class="t" style="left:901.00px;top:588.91px;font-size:12.96px;line-height:16px;color:#2e2e2e;font-weight:normal;font-style:normal;font-family:'Liberation Sans', sans-serif;">US</div>
<div class="t" style="left:1102.00px;top:588.91px;font-size:12.96px;line-height:16px;color:#2e2e2e;font-weight:normal;font-style:normal;font-family:'Liberation Sans', sans-serif;">USD</div>
<div class="t" style="right:416.40px;top:588.85px;font-size:13.12px;line-height:16px;color:#2e2e2e;font-weight:normal;font-style:italic;font-family:'Liberation Sans', sans-serif;text-align:right">1.80372E+14</div>
<div class="t" style="left:1503.5px;width:57px;overflow:hidden;top:589.3px;font-size:13px;line-height:16px;color:#2e2e2e">Keyword_name</div>
<div class="t" style="left:457px;width:38px;text-align:center;top:614.5px;font-size:14.6px;line-height:17px;color:#333">17</div>
<div class="t" style="left:499.00px;top:615.31px;font-size:12.96px;line-height:16px;color:#2e2e2e;font-weight:normal;font-style:normal;font-family:'Liberation Sans', sans-serif;">AgencyT</div>
<div class="t" style="right:1018.40px;top:615.10px;font-size:13.56px;line-height:16px;color:#2e2e2e;font-weight:normal;font-style:italic;font-family:'Liberation Sans', sans-serif;text-align:right">2197350</div>
<div class="t" style="left:901.00px;top:615.31px;font-size:12.96px;line-height:16px;color:#2e2e2e;font-weight:normal;font-style:normal;font-family:'Liberation Sans', sans-serif;">US</div>
<div class="t" style="left:1102.00px;top:615.31px;font-size:12.96px;line-height:16px;color:#2e2e2e;font-weight:normal;font-style:normal;font-family:'Liberation Sans', sans-serif;">USD</div>
<div class="t" style="right:416.40px;top:615.25px;font-size:13.12px;line-height:16px;color:#2e2e2e;font-weight:normal;font-style:italic;font-family:'Liberation Sans', sans-serif;text-align:right">1.80372E+14</div>
<div class="t" style="left:1503.5px;width:57px;overflow:hidden;top:615.7px;font-size:13px;line-height:16px;color:#2e2e2e">Keyword_name</div>
<div class="t" style="left:457px;width:38px;text-align:center;top:640.9px;font-size:14.6px;line-height:17px;color:#333">18</div>
<div class="t" style="left:499.00px;top:641.71px;font-size:12.96px;line-height:16px;color:#2e2e2e;font-weight:normal;font-style:normal;font-family:'Liberation Sans', sans-serif;">AgencyT</div>
<div class="t" style="right:1018.40px;top:641.50px;font-size:13.56px;line-height:16px;color:#2e2e2e;font-weight:normal;font-style:italic;font-family:'Liberation Sans', sans-serif;text-align:right">2197350</div>
<div class="t" style="left:901.00px;top:641.71px;font-size:12.96px;line-height:16px;color:#2e2e2e;font-weight:normal;font-style:normal;font-family:'Liberation Sans', sans-serif;">US</div>
<div class="t" style="left:1102.00px;top:641.71px;font-size:12.96px;line-height:16px;color:#2e2e2e;font-weight:normal;font-style:normal;font-family:'Liberation Sans', sans-serif;">USD</div>
<div class="t" style="right:416.40px;top:641.65px;font-size:13.12px;line-height:16px;color:#2e2e2e;font-weight:normal;font-style:italic;font-family:'Liberation Sans', sans-serif;text-align:right">1.80372E+14</div>
<div class="t" style="left:1503.5px;width:57px;overflow:hidden;top:642.1px;font-size:13px;line-height:16px;color:#2e2e2e">Keyword_name</div>
<div class="t" style="left:457px;width:38px;text-align:center;top:667.3px;font-size:14.6px;line-height:17px;color:#333">19</div>
<div class="t" style="left:499.00px;top:668.11px;font-size:12.96px;line-height:16px;color:#2e2e2e;font-weight:normal;font-style:normal;font-family:'Liberation Sans', sans-serif;">AgencyT</div>
<div class="t" style="right:1018.40px;top:667.90px;font-size:13.56px;line-height:16px;color:#2e2e2e;font-weight:normal;font-style:italic;font-family:'Liberation Sans', sans-serif;text-align:right">2197350</div>
<div class="t" style="left:901.00px;top:668.11px;font-size:12.96px;line-height:16px;color:#2e2e2e;font-weight:normal;font-style:normal;font-family:'Liberation Sans', sans-serif;">US</div>
<div class="t" style="left:1102.00px;top:668.11px;font-size:12.96px;line-height:16px;color:#2e2e2e;font-weight:normal;font-style:normal;font-family:'Liberation Sans', sans-serif;">USD</div>
<div class="t" style="right:416.40px;top:668.05px;font-size:13.12px;line-height:16px;color:#2e2e2e;font-weight:normal;font-style:italic;font-family:'Liberation Sans', sans-serif;text-align:right">1.80372E+14</div>
<div class="t" style="left:1503.5px;width:57px;overflow:hidden;top:668.5px;font-size:13px;line-height:16px;color:#2e2e2e">Keyword_name</div>
<div class="t" style="left:457px;width:38px;text-align:center;top:693.7px;font-size:14.6px;line-height:17px;color:#333">20</div>
<div class="t" style="left:499.00px;top:694.51px;font-size:12.96px;line-height:16px;color:#2e2e2e;font-weight:normal;font-style:normal;font-family:'Liberation Sans', sans-serif;">AgencyT</div>
<div class="t" style="right:1018.40px;top:694.30px;font-size:13.56px;line-height:16px;color:#2e2e2e;font-weight:normal;font-style:italic;font-family:'Liberation Sans', sans-serif;text-align:right">2197350</div>
<div class="t" style="left:901.00px;top:694.51px;font-size:12.96px;line-height:16px;color:#2e2e2e;font-weight:normal;font-style:normal;font-family:'Liberation Sans', sans-serif;">US</div>
<div class="t" style="left:1102.00px;top:694.51px;font-size:12.96px;line-height:16px;color:#2e2e2e;font-weight:normal;font-style:normal;font-family:'Liberation Sans', sans-serif;">USD</div>
<div class="t" style="right:416.40px;top:694.45px;font-size:13.12px;line-height:16px;color:#2e2e2e;font-weight:normal;font-style:italic;font-family:'Liberation Sans', sans-serif;text-align:right">1.80372E+14</div>
<div class="t" style="left:1503.5px;width:57px;overflow:hidden;top:694.9px;font-size:13px;line-height:16px;color:#2e2e2e">Keyword_name</div>
<div class="t" style="left:457px;width:38px;text-align:center;top:720.1px;font-size:14.6px;line-height:17px;color:#333">21</div>
<div class="t" style="left:499.00px;top:720.91px;font-size:12.96px;line-height:16px;color:#2e2e2e;font-weight:normal;font-style:normal;font-family:'Liberation Sans', sans-serif;">AgencyT</div>
<div class="t" style="right:1018.40px;top:720.70px;font-size:13.56px;line-height:16px;color:#2e2e2e;font-weight:normal;font-style:italic;font-family:'Liberation Sans', sans-serif;text-align:right">2197350</div>
<div class="t" style="left:901.00px;top:720.91px;font-size:12.96px;line-height:16px;color:#2e2e2e;font-weight:normal;font-style:normal;font-family:'Liberation Sans', sans-serif;">US</div>
<div class="t" style="left:1102.00px;top:720.91px;font-size:12.96px;line-height:16px;color:#2e2e2e;font-weight:normal;font-style:normal;font-family:'Liberation Sans', sans-serif;">USD</div>
<div class="t" style="right:416.40px;top:720.85px;font-size:13.12px;line-height:16px;color:#2e2e2e;font-weight:normal;font-style:italic;font-family:'Liberation Sans', sans-serif;text-align:right">4.97086E+13</div>
<div class="t" style="left:1503.5px;width:57px;overflow:hidden;top:721.3px;font-size:13px;line-height:16px;color:#2e2e2e">Keyword_name</div>
<div class="t" style="left:457px;width:38px;text-align:center;top:746.5px;font-size:14.6px;line-height:17px;color:#333">22</div>
<div class="t" style="left:499.00px;top:747.31px;font-size:12.96px;line-height:16px;color:#2e2e2e;font-weight:normal;font-style:normal;font-family:'Liberation Sans', sans-serif;">AgencyT</div>
<div class="t" style="right:1018.40px;top:747.10px;font-size:13.56px;line-height:16px;color:#2e2e2e;font-weight:normal;font-style:italic;font-family:'Liberation Sans', sans-serif;text-align:right">2197350</div>
<div class="t" style="left:901.00px;top:747.31px;font-size:12.96px;line-height:16px;color:#2e2e2e;font-weight:normal;font-style:normal;font-family:'Liberation Sans', sans-serif;">US</div>
<div class="t" style="left:1102.00px;top:747.31px;font-size:12.96px;line-height:16px;color:#2e2e2e;font-weight:normal;font-style:normal;font-family:'Liberation Sans', sans-serif;">USD</div>
<div class="t" style="right:416.40px;top:747.25px;font-size:13.12px;line-height:16px;color:#2e2e2e;font-weight:normal;font-style:italic;font-family:'Liberation Sans', sans-serif;text-align:right">4.97086E+13</div>
<div class="t" style="left:1503.5px;width:57px;overflow:hidden;top:747.7px;font-size:13px;line-height:16px;color:#2e2e2e">Keyword_name</div>
<div class="t" style="left:457px;width:38px;text-align:center;top:772.9px;font-size:14.6px;line-height:17px;color:#333">23</div>
<div class="t" style="left:499.00px;top:773.71px;font-size:12.96px;line-height:16px;color:#2e2e2e;font-weight:normal;font-style:normal;font-family:'Liberation Sans', sans-serif;">AgencyT</div>
<div class="t" style="right:1018.40px;top:773.50px;font-size:13.56px;line-height:16px;color:#2e2e2e;font-weight:normal;font-style:italic;font-family:'Liberation Sans', sans-serif;text-align:right">2197350</div>
<div class="t" style="left:901.00px;top:773.71px;font-size:12.96px;line-height:16px;color:#2e2e2e;font-weight:normal;font-style:normal;font-family:'Liberation Sans', sans-serif;">US</div>
<div class="t" style="left:1102.00px;top:773.71px;font-size:12.96px;line-height:16px;color:#2e2e2e;font-weight:normal;font-style:normal;font-family:'Liberation Sans', sans-serif;">USD</div>
<div class="t" style="right:416.40px;top:773.65px;font-size:13.12px;line-height:16px;color:#2e2e2e;font-weight:normal;font-style:italic;font-family:'Liberation Sans', sans-serif;text-align:right">4.97086E+13</div>
<div class="t" style="left:1503.5px;width:57px;overflow:hidden;top:774.1px;font-size:13px;line-height:16px;color:#2e2e2e">Keyword_name</div>
<div class="t" style="left:457px;width:38px;text-align:center;top:799.3px;font-size:14.6px;line-height:17px;color:#333">24</div>
<div class="t" style="left:499.00px;top:800.11px;font-size:12.96px;line-height:16px;color:#2e2e2e;font-weight:normal;font-style:normal;font-family:'Liberation Sans', sans-serif;">AgencyT</div>
<div class="t" style="right:1018.40px;top:799.90px;font-size:13.56px;line-height:16px;color:#2e2e2e;font-weight:normal;font-style:italic;font-family:'Liberation Sans', sans-serif;text-align:right">2197350</div>
<div class="t" style="left:901.00px;top:800.11px;font-size:12.96px;line-height:16px;color:#2e2e2e;font-weight:normal;font-style:normal;font-family:'Liberation Sans', sans-serif;">US</div>
<div class="t" style="left:1102.00px;top:800.11px;font-size:12.96px;line-height:16px;color:#2e2e2e;font-weight:normal;font-style:normal;font-family:'Liberation Sans', sans-serif;">USD</div>
<div class="t" style="right:416.40px;top:800.05px;font-size:13.12px;line-height:16px;color:#2e2e2e;font-weight:normal;font-style:italic;font-family:'Liberation Sans', sans-serif;text-align:right">4.97086E+13</div>
<div class="t" style="left:1503.5px;width:57px;overflow:hidden;top:800.5px;font-size:13px;line-height:16px;color:#2e2e2e">Keyword_name</div>
<div class="t" style="left:457px;width:38px;text-align:center;top:825.7px;font-size:14.6px;line-height:17px;color:#333">25</div>
<div class="t" style="left:499.00px;top:826.51px;font-size:12.96px;line-height:16px;color:#2e2e2e;font-weight:normal;font-style:normal;font-family:'Liberation Sans', sans-serif;">AgencyT</div>
<div class="t" style="right:1018.40px;top:826.30px;font-size:13.56px;line-height:16px;color:#2e2e2e;font-weight:normal;font-style:italic;font-family:'Liberation Sans', sans-serif;text-align:right">2197350</div>
<div class="t" style="left:901.00px;top:826.51px;font-size:12.96px;line-height:16px;color:#2e2e2e;font-weight:normal;font-style:normal;font-family:'Liberation Sans', sans-serif;">US</div>
<div class="t" style="left:1102.00px;top:826.51px;font-size:12.96px;line-height:16px;color:#2e2e2e;font-weight:normal;font-style:normal;font-family:'Liberation Sans', sans-serif;">USD</div>
<div class="t" style="right:416.40px;top:826.45px;font-size:13.12px;line-height:16px;color:#2e2e2e;font-weight:normal;font-style:italic;font-family:'Liberation Sans', sans-serif;text-align:right">4.97086E+13</div>
<div class="t" style="left:1503.5px;width:57px;overflow:hidden;top:826.9px;font-size:13px;line-height:16px;color:#2e2e2e">Keyword_name</div>
<div class="t" style="left:457px;width:38px;text-align:center;top:852.1px;font-size:14.6px;line-height:17px;color:#333">26</div>
<div class="t" style="left:499.00px;top:852.91px;font-size:12.96px;line-height:16px;color:#2e2e2e;font-weight:normal;font-style:normal;font-family:'Liberation Sans', sans-serif;">AgencyT</div>
<div class="t" style="right:1018.40px;top:852.70px;font-size:13.56px;line-height:16px;color:#2e2e2e;font-weight:normal;font-style:italic;font-family:'Liberation Sans', sans-serif;text-align:right">2197350</div>
<div class="t" style="left:901.00px;top:852.91px;font-size:12.96px;line-height:16px;color:#2e2e2e;font-weight:normal;font-style:normal;font-family:'Liberation Sans', sans-serif;">US</div>
<div class="t" style="left:1102.00px;top:852.91px;font-size:12.96px;line-height:16px;color:#2e2e2e;font-weight:normal;font-style:normal;font-family:'Liberation Sans', sans-serif;">USD</div>
<div class="t" style="right:416.40px;top:852.85px;font-size:13.12px;line-height:16px;color:#2e2e2e;font-weight:normal;font-style:italic;font-family:'Liberation Sans', sans-serif;text-align:right">4.97086E+13</div>
<div class="t" style="left:1503.5px;width:57px;overflow:hidden;top:853.3px;font-size:13px;line-height:16px;color:#2e2e2e">Keyword_name</div>
<div class="t" style="left:457px;width:38px;text-align:center;top:878.5px;font-size:14.6px;line-height:17px;color:#333">27</div>
<div class="t" style="left:499.00px;top:879.31px;font-size:12.96px;line-height:16px;color:#2e2e2e;font-weight:normal;font-style:normal;font-family:'Liberation Sans', sans-serif;">AgencyT</div>
<div class="t" style="right:1018.40px;top:879.10px;font-size:13.56px;line-height:16px;color:#2e2e2e;font-weight:normal;font-style:italic;font-family:'Liberation Sans', sans-serif;text-align:right">2197350</div>
<div class="t" style="left:901.00px;top:879.31px;font-size:12.96px;line-height:16px;color:#2e2e2e;font-weight:normal;font-style:normal;font-family:'Liberation Sans', sans-serif;">US</div>
<div class="t" style="left:1102.00px;top:879.31px;font-size:12.96px;line-height:16px;color:#2e2e2e;font-weight:normal;font-style:normal;font-family:'Liberation Sans', sans-serif;">USD</div>
<div class="t" style="right:416.40px;top:879.25px;font-size:13.12px;line-height:16px;color:#2e2e2e;font-weight:normal;font-style:italic;font-family:'Liberation Sans', sans-serif;text-align:right">4.97086E+13</div>
<div class="t" style="left:1503.5px;width:57px;overflow:hidden;top:879.7px;font-size:13px;line-height:16px;color:#2e2e2e">Keyword_name</div>
<div class="t" style="left:457px;width:38px;text-align:center;top:904.9px;font-size:14.6px;line-height:17px;color:#333">28</div>
<div class="t" style="left:499.00px;top:905.71px;font-size:12.96px;line-height:16px;color:#2e2e2e;font-weight:normal;font-style:normal;font-family:'Liberation Sans', sans-serif;">AgencyT</div>
<div class="t" style="right:1018.40px;top:905.50px;font-size:13.56px;line-height:16px;color:#2e2e2e;font-weight:normal;font-style:italic;font-family:'Liberation Sans', sans-serif;text-align:right">2197350</div>
<div class="t" style="left:901.00px;top:905.71px;font-size:12.96px;line-height:16px;color:#2e2e2e;font-weight:normal;font-style:normal;font-family:'Liberation Sans', sans-serif;">US</div>
<div class="t" style="left:1102.00px;top:905.71px;font-size:12.96px;line-height:16px;color:#2e2e2e;font-weight:normal;font-style:normal;font-family:'Liberation Sans', sans-serif;">USD</div>
<div class="t" style="right:416.40px;top:905.65px;font-size:13.12px;line-height:16px;color:#2e2e2e;font-weight:normal;font-style:italic;font-family:'Liberation Sans', sans-serif;text-align:right">4.97086E+13</div>
<div class="t" style="left:1503.5px;width:57px;overflow:hidden;top:906.1px;font-size:13px;line-height:16px;color:#2e2e2e">Keyword_name</div>
<div class="t" style="left:457px;width:38px;text-align:center;top:931.3px;font-size:14.6px;line-height:17px;color:#333">29</div>
<div class="t" style="left:499.00px;top:932.11px;font-size:12.96px;line-height:16px;color:#2e2e2e;font-weight:normal;font-style:normal;font-family:'Liberation Sans', sans-serif;">AgencyT</div>
<div class="t" style="right:1018.40px;top:931.90px;font-size:13.56px;line-height:16px;color:#2e2e2e;font-weight:normal;font-style:italic;font-family:'Liberation Sans', sans-serif;text-align:right">2197350</div>
<div class="t" style="left:901.00px;top:932.11px;font-size:12.96px;line-height:16px;color:#2e2e2e;font-weight:normal;font-style:normal;font-family:'Liberation Sans', sans-serif;">US</div>
<div class="t" style="left:1102.00px;top:932.11px;font-size:12.96px;line-height:16px;color:#2e2e2e;font-weight:normal;font-style:normal;font-family:'Liberation Sans', sans-serif;">USD</div>
<div class="t" style="right:416.40px;top:932.05px;font-size:13.12px;line-height:16px;color:#2e2e2e;font-weight:normal;font-style:italic;font-family:'Liberation Sans', sans-serif;text-align:right">4.97086E+13</div>
<div class="t" style="left:1503.5px;width:57px;overflow:hidden;top:932.5px;font-size:13px;line-height:16px;color:#2e2e2e">Keyword_name</div>
<div class="r" style="left:1561px;top:187px;width:20px;height:733px;background:#f0f0f0;"></div>
<div class="r" style="left:1561px;top:230px;width:20px;height:357px;background:#c8c8c8;"></div>
<svg style="left:1563px;top:208px" width="16" height="12" viewBox="0 0 16 12"><path d="M1.5 10 L8 3 L14.5 10" stroke="#555" stroke-width="2.6" fill="none"/></svg>
<svg style="left:1563px;top:887px" width="16" height="12" viewBox="0 0 16 12"><path d="M1.5 2 L8 9 L14.5 2" stroke="#555" stroke-width="2.6" fill="none"/></svg>
<div class="r" style="left:1561px;top:920px;width:25px;height:18px;background:#fff;"></div>
<div class="r" style="left:495px;top:920px;width:1066px;height:18px;background:#f0f0f0;"></div>
<div class="r" style="left:538px;top:921px;width:204px;height:17px;background:#c8c8c8;"></div>
<svg style="left:516px;top:923px" width="13" height="14" viewBox="0 0 13 14"><path d="M10 1.8 L3.6 7 L10 12.2" stroke="#555" stroke-width="3.2" fill="none"/></svg>
<svg style="left:1527px;top:923px" width="13" height="14" viewBox="0 0 13 14"><path d="M3 1.8 L9.4 7 L3 12.2" stroke="#555" stroke-width="3.2" fill="none"/></svg>
<div class="r" style="left:1586px;top:0px;width:1px;height:938px;background:#d4d4d4;"></div>
<div class="t" style="left:1606.30px;top:21.83px;font-size:25px;line-height:30px;color:#3f8c66;font-weight:normal;font-style:normal;font-family:'Liberation Sans', sans-serif;transform:scaleX(0.92);transform-origin:0 0;">Query Settings</div>
<svg style="left:1873px;top:29px" width="16" height="16" viewBox="0 0 16 16"><path d="M1 1 L15 15 M15 1 L1 15" stroke="#666" stroke-width="1.5" fill="none"/></svg>
<svg style="left:1600px;top:79.2px" width="8" height="8" viewBox="0 0 8 8"><path d="M0 7 L7 7 L7 0 Z" fill="#444"/></svg>
<div class="t" style="left:1617.00px;top:76.01px;font-size:13.52px;line-height:16px;color:#1f6e43;font-weight:bold;font-style:normal;font-family:'Liberation Sans', sans-serif;">PROPERTIES</div>
<div class="t" style="left:1617.00px;top:100.54px;font-size:14.6px;line-height:18px;color:#2e2e2e;font-weight:normal;font-style:normal;font-family:'Liberation Sans', sans-serif;">Name</div>
<div class="r" style="left:1616px;top:121px;width:274px;height:28px;background:#fff;box-sizing:border-box;border:1px solid #ababab"></div>
<div class="t" style="left:1624.50px;top:127.63px;font-size:13.77px;line-height:17px;color:#3c3c3c;font-weight:normal;font-style:normal;font-family:'Liberation Sans', sans-serif;">Transform Sample File</div>
<div class="t" style="left:1617.00px;top:159.88px;font-size:14.76px;line-height:18px;color:#2f62a6;font-weight:normal;font-style:normal;font-family:'Liberation Sans', sans-serif;">All Properties</div>
<svg style="left:1600px;top:206px" width="8" height="8" viewBox="0 0 8 8"><path d="M0 7 L7 7 L7 0 Z" fill="#444"/></svg>
<div class="t" style="left:1617.00px;top:203.18px;font-size:13.6px;line-height:16px;color:#1f6e43;font-weight:bold;font-style:normal;font-family:'Liberation Sans', sans-serif;">APPLIED STEPS</div>
<div class="r" style="left:1616px;top:228px;width:274px;height:688px;background:#fff;box-sizing:border-box;border:1px solid #c6c6c6"></div>
<div class="r" style="left:1618px;top:329px;width:271px;height:25px;background:#d3efe0;"></div>
<div class="t" style="left:1642.80px;top:233.47px;font-size:14.8px;line-height:18px;color:#2e2e2e;font-weight:normal;font-style:normal;font-family:'Liberation Sans', sans-serif;">Source</div>
<svg style="left:1866px;top:233.8px" width="14" height="14" viewBox="0 0 14 14"><g fill="#a6a6a6"><circle cx="7" cy="7" r="4.9"/><rect x="5.4" y="0" width="3.2" height="3.6" transform="rotate(30 7 7)"/><rect x="5.4" y="0" width="3.2" height="3.6" transform="rotate(90 7 7)"/><rect x="5.4" y="0" width="3.2" height="3.6" transform="rotate(150 7 7)"/><rect x="5.4" y="0" width="3.2" height="3.6" transform="rotate(210 7 7)"/><rect x="5.4" y="0" width="3.2" height="3.6" transform="rotate(270 7 7)"/><rect x="5.4" y="0" width="3.2" height="3.6" transform="rotate(330 7 7)"/></g><circle cx="7" cy="7" r="2" fill="#fff"/></svg>
<div class="t" style="left:1642.80px;top:258.49px;font-size:14.8px;line-height:18px;color:#2e2e2e;font-weight:normal;font-style:normal;font-family:'Liberation Sans', sans-serif;">Navigation</div>
<svg style="left:1866px;top:259.7px" width="14" height="14" viewBox="0 0 14 14"><g fill="#a6a6a6"><circle cx="7" cy="7" r="4.9"/><rect x="5.4" y="0" width="3.2" height="3.6" transform="rotate(30 7 7)"/><rect x="5.4" y="0" width="3.2" height="3.6" transform="rotate(90 7 7)"/><rect x="5.4" y="0" width="3.2" height="3.6" transform="rotate(150 7 7)"/><rect x="5.4" y="0" width="3.2" height="3.6" transform="rotate(210 7 7)"/><rect x="5.4" y="0" width="3.2" height="3.6" transform="rotate(270 7 7)"/><rect x="5.4" y="0" width="3.2" height="3.6" transform="rotate(330 7 7)"/></g><circle cx="7" cy="7" r="2" fill="#fff"/></svg>
<div class="t" style="left:1642.80px;top:283.51px;font-size:14.8px;line-height:18px;color:#2e2e2e;font-weight:normal;font-style:normal;font-family:'Liberation Sans', sans-serif;">Promoted Headers</div>
<svg style="left:1866px;top:284.8px" width="14" height="14" viewBox="0 0 14 14"><g fill="#a6a6a6"><circle cx="7" cy="7" r="4.9"/><rect x="5.4" y="0" width="3.2" height="3.6" transform="rotate(30 7 7)"/><rect x="5.4" y="0" width="3.2" height="3.6" transform="rotate(90 7 7)"/><rect x="5.4" y="0" width="3.2" height="3.6" transform="rotate(150 7 7)"/><rect x="5.4" y="0" width="3.2" height="3.6" transform="rotate(210 7 7)"/><rect x="5.4" y="0" width="3.2" height="3.6" transform="rotate(270 7 7)"/><rect x="5.4" y="0" width="3.2" height="3.6" transform="rotate(330 7 7)"/></g><circle cx="7" cy="7" r="2" fill="#fff"/></svg>
<div class="t" style="left:1642.80px;top:308.53px;font-size:14.8px;line-height:18px;color:#2e2e2e;font-weight:normal;font-style:normal;font-family:'Liberation Sans', sans-serif;">Changed Type</div>
<div class="t" style="left:1642.80px;top:333.55px;font-size:14.8px;line-height:18px;color:#2e2e2e;font-weight:normal;font-style:normal;font-family:'Liberation Sans', sans-serif;">Removed Columns</div>
<svg style="left:1623px;top:337px" width="13" height="11" viewBox="0 0 13 11"><path d="M1.2 1 Q6 5 11.8 10.5 M11.8 0.6 Q6 4.6 1.2 10.5" stroke="#777" stroke-width="2" fill="none" stroke-linecap="round"/></svg>
</body></html>
